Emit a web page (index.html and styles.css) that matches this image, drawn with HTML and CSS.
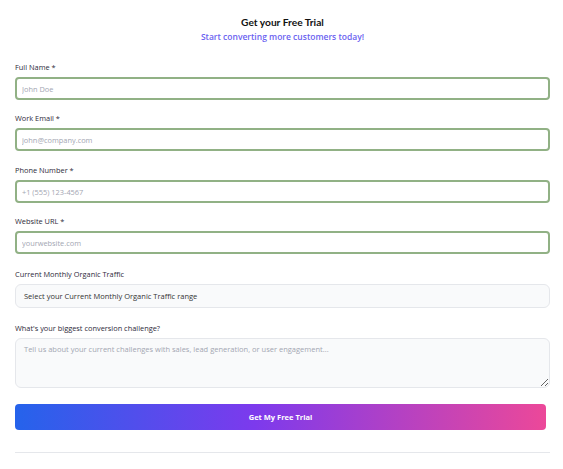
FILE: index.html
```html
<!DOCTYPE html>
<html lang="en">
<head>
    <meta charset="UTF-8">
    <meta name="viewport" content="width=device-width, initial-scale=1.0">
    <title>Get your Free Trial</title>
    <link rel="stylesheet" href="styles.css">
</head>
<body>
    <main class="trial">
        <header class="trial-head">
            <h1 class="trial-title">Get your Free Trial</h1>
            <p class="trial-sub">Start converting more customers today!</p>
        </header>
        <form class="trial-form">
            <div class="field">
                <label class="field-label">Full Name *</label>
                <input class="field-input" type="text" placeholder="John Doe">
            </div>
            <div class="field">
                <label class="field-label">Work Email *</label>
                <input class="field-input" type="email" placeholder="john@company.com">
            </div>
            <div class="field">
                <label class="field-label">Phone Number *</label>
                <input class="field-input" type="tel" placeholder="+1 (555) 123-4567">
            </div>
            <div class="field">
                <label class="field-label">Website URL *</label>
                <input class="field-input" type="text" placeholder="yourwebsite.com">
            </div>
            <div class="field field--select">
                <label class="field-label">Current Monthly Organic Traffic</label>
                <div class="field-select">Select your Current Monthly Organic Traffic range</div>
            </div>
            <div class="field field--area">
                <label class="field-label">What's your biggest conversion challenge?</label>
                <textarea class="field-area" placeholder="Tell us about your current challenges with sales, lead generation, or user engagement..."></textarea>
            </div>
            <button class="submit" type="button">Get My Free Trial</button>
        </form>
        <hr class="divider">
    </main>
</body>
</html>
```

FILE: styles.css
```css
body{
    margin: 0;
    background-color: #ffffff;
    font-family: "Open Sans", "Noto Sans", Arial, sans-serif;
    color: #1f2937;
}
.trial{
    padding: 16px 13px 0 15px;
}
.trial-head{
    text-align: center;
}
.trial-title{
    margin: 0;
    font-family: Lato, "Open Sans", sans-serif;
    font-size: 10.2px;
    line-height: 13px;
    font-weight: 700;
    color: #111111;
}
.trial-sub{
    margin: 2px 0 0;
    font-size: 8.5px;
    line-height: 12px;
    font-weight: 600;
    color: #6b63f0;
}
.trial-form{
    display: flex;
    flex-direction: column;
    margin-top: 19px;
}
.field{
    display: flex;
    flex-direction: column;
    gap: 5px;
    margin-bottom: 13px;
}
.field:nth-child(2){
    margin-bottom: 14px;
}
.field-label{
    font-size: 7.4px;
    line-height: 10px;
    font-weight: 500;
    color: #2e2a3a;
}
.field-input{
    box-sizing: border-box;
    height: 23px;
    margin: 0;
    padding: 0 5px;
    border: 2px solid #91b185;
    border-radius: 4px;
    font-family: inherit;
    font-size: 7.4px;
    color: #333;
    background: #fff;
}
.field-input::placeholder,
.field-area::placeholder{
    color: #a3a6b2;
}
.field--select{
    margin-top: 2px;
    margin-bottom: 15px;
}
.field-select{
    box-sizing: border-box;
    height: 24px;
    padding: 0 8px;
    display: flex;
    align-items: center;
    border: 1px solid #e5e7eb;
    border-radius: 6px;
    background: #f9fafb;
    font-size: 7.5px;
    color: #333333;
}
.field--area{
    margin-bottom: 16px;
}
.field-area{
    box-sizing: border-box;
    height: 50px;
    margin: 0;
    padding: 5px 8px;
    border: 1px solid #e5e7eb;
    border-radius: 6px;
    background: #f9fafb;
    font-family: inherit;
    font-size: 7.5px;
    resize: vertical;
}
.submit{
    height: 26px;
    margin: 0 4px 0 0;
    border: none;
    border-radius: 4px;
    background: linear-gradient(90deg, #2563eb 0%, #7c3aed 45%, #ec4899 100%);
    color: #ffffff;
    font-family: inherit;
    font-size: 7.5px;
    font-weight: 700;
    cursor: pointer;
}
.divider{
    margin: 22px 0 0;
    border: none;
    border-top: 1px solid #e5e7eb;
}
```
